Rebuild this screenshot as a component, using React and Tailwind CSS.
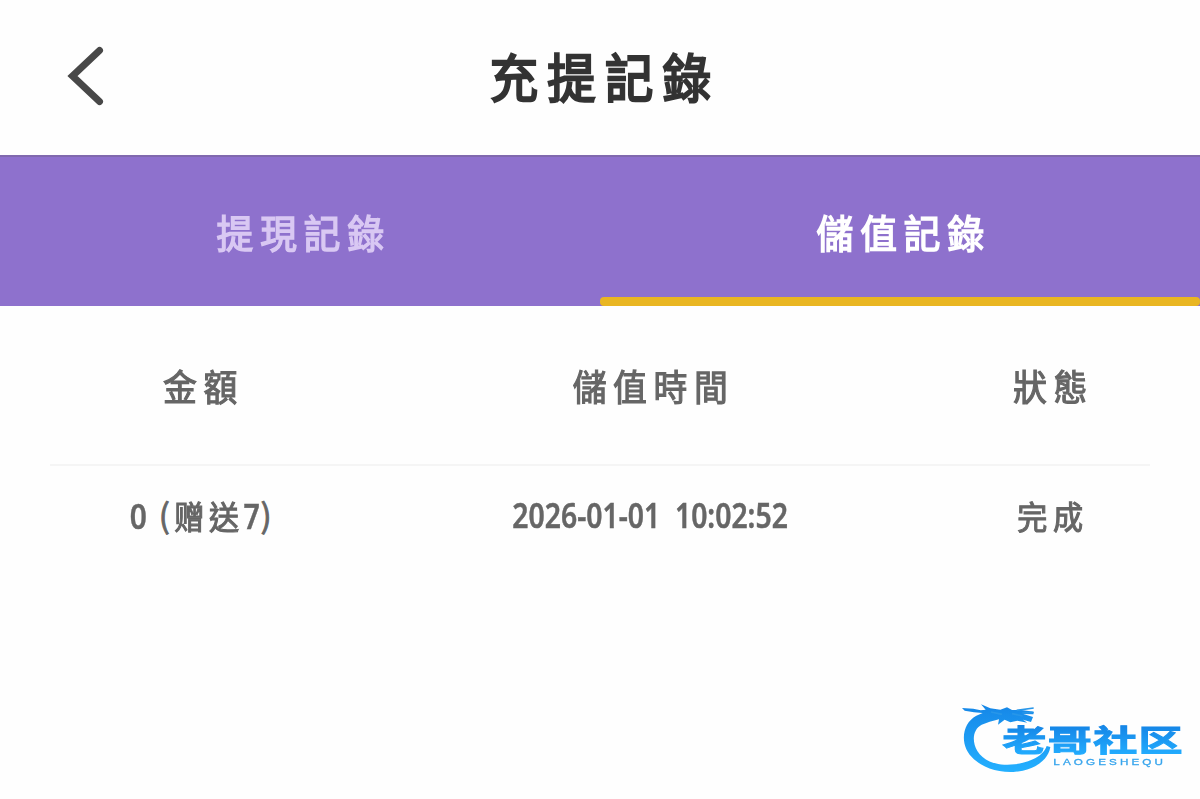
import React from 'react';

function Label({ className = '', children }) {
  return (
    <span
      className={`inline-block whitespace-nowrap font-['Noto_Sans_CJK_TC','Noto_Sans_CJK_SC',sans-serif] font-normal leading-none [stroke-linejoin:round] ${className}`}
    >
      {children}
    </span>
  );
}

function BackIcon() {
  return (
    <svg width="40" height="64" viewBox="0 0 40 64" fill="none" aria-label="返回">
      <path d="M33.5 6.5L6.5 32L33.5 57.5" stroke="#484848" strokeWidth="7" strokeLinecap="round" strokeLinejoin="miter" />
    </svg>
  );
}

function CommunityLogo() {
  return (
    <svg width="260" height="109" viewBox="0 0 780 327" className="blur-[0.7px]">
      <defs>
        <linearGradient id="ring" gradientUnits="userSpaceOnUse" x1="0" y1="50" x2="0" y2="245">
          <stop offset="0" stopColor="#1688e8" />
          <stop offset="1" stopColor="#24b0ff" />
        </linearGradient>
        <linearGradient id="word" gradientUnits="userSpaceOnUse" x1="0" y1="106" x2="0" y2="196">
          <stop offset="0" stopColor="#1585e6" />
          <stop offset="1" stopColor="#22adff" />
        </linearGradient>
      </defs>
      <path d="M66 54L100 56L122 61L137 59L123 43L151 55L181 59L201 52L216 60L244 60L282 65L280 73L250 72L279 81L273 96L249 89L262 98L232 92L211 97L194 89L174 104L177 88L149 95L125 104C98 118 95 155 112 183C132 216 177 229 224 223C269 217 311 198 320 168L331 171C324 214 278 242 220 246C154 249 97 217 79 178C62 139 75 95 109 77L128 69L102 67L74 62Z" fill="url(#ring)" />
      <path d="M153 66L186 73M216 71L248 78M230 61L281 54M247 69L278 67" stroke="#2796e9" strokeWidth="5" fill="none" />
      <g transform="translate(187 0) scale(1.47 1)">
        <text x="0" y="184" fontFamily="'Noto Sans CJK SC', sans-serif" fontWeight="700" fontSize="90" textLength="368" lengthAdjust="spacing" fill="url(#word)" stroke="url(#word)" strokeWidth="3">老哥社区</text>
      </g>
      <g transform="translate(340 0) scale(1.25 1)">
        <text x="0" y="224" fontFamily="'Liberation Sans', sans-serif" fontSize="28" textLength="263" lengthAdjust="spacing" fill="#38a5ed" stroke="#38a5ed" strokeWidth="1">LAOGESHEQU</text>
      </g>
    </svg>
  );
}

export default function App() {
  return (
    <div className="relative flex h-[799px] w-full flex-col overflow-hidden bg-[#fefefe]">
      <header className="grid h-[155px] shrink-0 grid-cols-[200px_1fr_200px] items-center">
        <div className="pb-[4px] pl-[66px]"><BackIcon /></div>
        <h1 className="pb-[2px] text-center">
          <Label className="-mr-[10px] scale-x-[0.93] text-[52px] tracking-[10px] text-[#333] [-webkit-text-stroke:2.4px_#333]">充提記錄</Label>
        </h1>
      </header>
      <nav className="grid h-[151px] shrink-0 grid-cols-2 border-t-2 border-[#8069ae] bg-[#8e71cd] text-center">
        <button className="flex items-center justify-center pb-[1px]">
          <Label className="-mr-[8px] scale-x-[0.94] text-[39px] tracking-[7.4px] text-[#d9c8f3] [-webkit-text-stroke:1.5px_#d9c8f3]">提現記錄</Label>
        </button>
        <button className="flex flex-col">
          <span className="flex w-full flex-1 items-center justify-center pt-[8px]">
            <Label className="-mr-[8px] scale-x-[0.94] text-[39px] tracking-[7.4px] text-white [-webkit-text-stroke:1.6px_white]">儲值記錄</Label>
          </span>
          <span className="h-[9px] w-full rounded-[4px] bg-[#e9b622]" />
        </button>
      </nav>
      <main className="px-[50px] text-[#666]">
        <div className="grid h-[160px] grid-cols-[300px_1fr_200px] items-center border-b-2 border-[#f5f5f5] text-center">
          <Label className="-mr-[7px] scale-x-[0.94] text-[36px] tracking-[7px] [-webkit-text-stroke:1.2px_#666]">金額</Label>
          <Label className="-mr-[7px] scale-x-[0.94] text-[36px] tracking-[7px] [-webkit-text-stroke:1.2px_#666]">儲值時間</Label>
          <Label className="-mr-[7px] scale-x-[0.94] text-[36px] tracking-[7px] [-webkit-text-stroke:1.2px_#666]">狀態</Label>
        </div>
        <div className="grid h-[97px] grid-cols-[300px_1fr_200px] items-center text-center">
          <div className="flex items-center justify-center">
            <span className="inline-block scale-x-[0.88] whitespace-pre pt-[2px] font-['Noto_Sans',sans-serif] text-[34px] font-semibold leading-none [-webkit-text-stroke:0.4px_#666]">0 </span>
            <Label className="ml-[2px] mr-[2px] text-[33px] [-webkit-text-stroke:0.9px_#666]">(</Label>
            <Label className="-mr-[3px] scale-x-[0.94] text-[32px] tracking-[5px] [-webkit-text-stroke:1.1px_#666]">赠送</Label>
            <span className="-mx-[1px] inline-block scale-x-[0.84] pt-[2px] font-['Noto_Sans',sans-serif] text-[34px] font-semibold leading-none [-webkit-text-stroke:0.4px_#666]">7</span>
            <Label className="text-[33px] [-webkit-text-stroke:0.9px_#666]">)</Label>
          </div>
          <div className="flex justify-center">
            <span className="scale-x-[0.81] whitespace-pre font-['Noto_Sans',sans-serif] text-[35px] font-semibold leading-none [-webkit-text-stroke:0.5px_#666]">2026-01-01  10:02:52</span>
          </div>
          <Label className="-mr-[6px] scale-x-[0.94] text-[32px] tracking-[6px] [-webkit-text-stroke:1.1px_#666]">完成</Label>
        </div>
      </main>
      <aside className="absolute bottom-0 right-0">
        <CommunityLogo />
      </aside>
    </div>
  );
}
